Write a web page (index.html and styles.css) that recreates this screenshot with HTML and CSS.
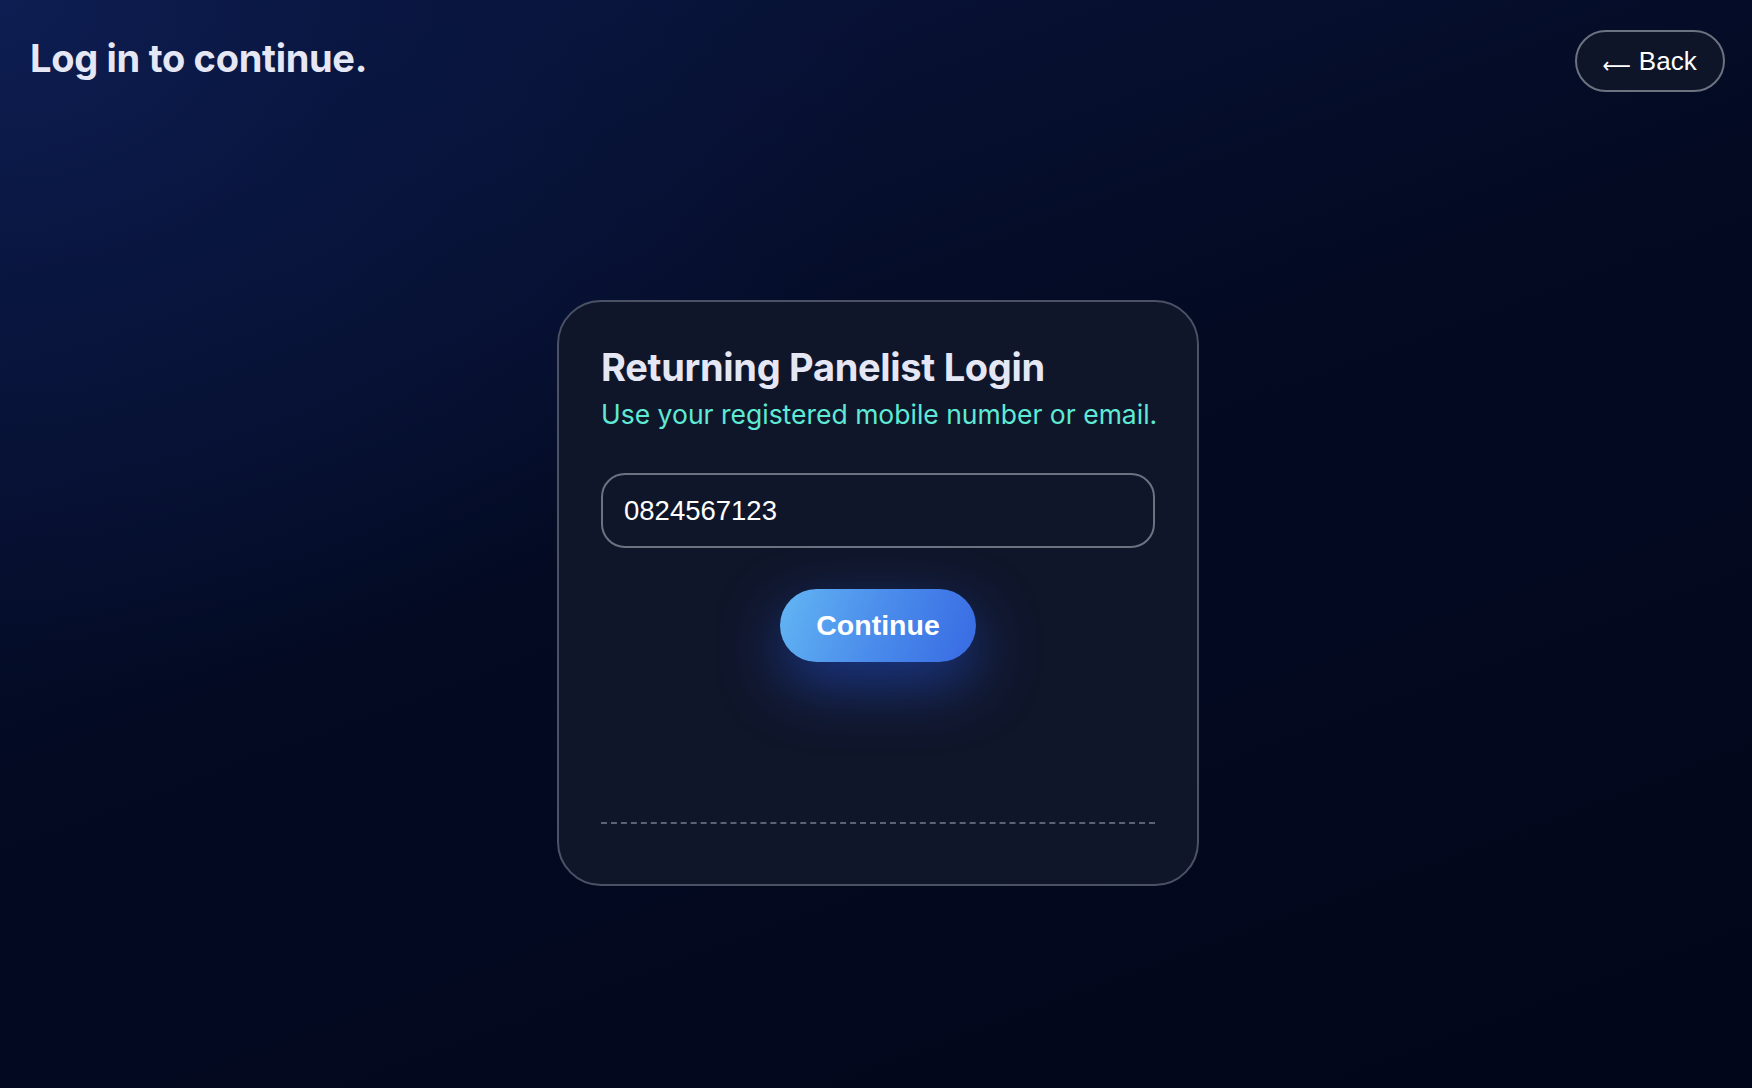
FILE: index.html
```html
<!DOCTYPE html>
<html lang="en">
<head>
<meta charset="utf-8">
<title>Log in</title>
<link rel="stylesheet" href="styles.css">
</head>
<body>
<div class="page">
  <header class="topbar">
    <h1 class="page-title">Log in to continue.</h1>
    <button class="back-btn" type="button"><span class="arrow">&#x27F5;</span> Back</button>
  </header>
  <main class="main">
    <section class="card">
      <h2 class="card-title">Returning Panelist Login</h2>
      <p class="card-sub">Use your registered mobile number or email.</p>
      <input class="field" type="text" value="0824567123">
      <div class="actions">
        <button class="continue-btn" type="button">Continue</button>
      </div>
      <div class="divider"></div>
    </section>
  </main>
</div>
</body>
</html>
```

FILE: styles.css
```css
* { box-sizing: border-box; }
html, body { margin: 0; padding: 0; }
body {
  width: 1752px;
  height: 1088px;
  overflow: hidden;
  background: #020617;
}
.page {
  width: 1752px;
  height: 1088px;
  background:
    radial-gradient(ellipse 900px 700px at 0% 0%, rgba(14, 30, 82, 0.95) 0%, rgba(10, 24, 70, 0.6) 40%, rgba(3, 8, 28, 0) 100%),
    linear-gradient(160deg, #0a1640 0%, #030a22 45%, #02061a 100%);
  font-family: "Inter", "Noto Sans", sans-serif;
}
.topbar {
  display: flex;
  justify-content: space-between;
  align-items: flex-start;
  padding: 30px 27px 0 30px;
}
.page-title {
  margin: 0;
  margin-top: 5px;
  font-size: 38px;
  line-height: 46px;
  font-weight: 700;
  color: #e5e7f5;
  letter-spacing: -0.3px;
}
.back-btn {
  height: 62px;
  width: 150px;
  border-radius: 31px;
  border: 2px solid #6b7280;
  background: #0f1528;
  color: #ffffff;
  font-family: "Liberation Sans", Arial, sans-serif;
  font-size: 26px;
  padding: 0 2px 0 0;
  display: flex;
  align-items: center;
  justify-content: center;
  gap: 6px;
}
.arrow {
  font-family: "DejaVu Sans", sans-serif;
  font-size: 22px;
  position: relative;
  top: 4px;
  transform: scaleX(0.9);
}
.main {
  display: flex;
  justify-content: center;
  padding-top: 208px;
  padding-left: 4px;
}
.card {
  width: 642px;
  height: 586px;
  border: 2px solid #4b5266;
  border-radius: 44px;
  background: #10162a;
  padding: 43px 42px 0 42px;
  display: flex;
  flex-direction: column;
}
.card-title {
  margin: 0;
  font-size: 38px;
  line-height: 44px;
  font-weight: 700;
  color: #e5e7f5;
  letter-spacing: -0.3px;
}
.card-sub {
  margin: 9px 0 0 0;
  font-size: 26.5px;
  line-height: 32px;
  color: #5eead4;
  white-space: nowrap;
}
.field {
  margin-top: 43px;
  width: 100%;
  height: 75px;
  border: 2px solid #6b7280;
  border-radius: 24px;
  background: #10162a;
  color: #ffffff;
  font-family: "Liberation Sans", Arial, sans-serif;
  font-size: 27.5px;
  padding: 0 21px;
  outline: none;
}
.actions {
  display: flex;
  justify-content: center;
  margin-top: 41px;
}
.continue-btn {
  width: 196px;
  height: 73px;
  border: none;
  border-radius: 37px;
  background: linear-gradient(110deg, #63b6f4 0%, #4a8ceb 50%, #386ae3 100%);
  color: #ffffff;
  font-family: "Liberation Sans", Arial, sans-serif;
  font-weight: 700;
  font-size: 28.5px;
  box-shadow: 0 22px 60px rgba(40, 90, 230, 0.5);
}
.divider {
  margin-top: 160px;
  border-top: 2px dashed #5b6275;
}
```
